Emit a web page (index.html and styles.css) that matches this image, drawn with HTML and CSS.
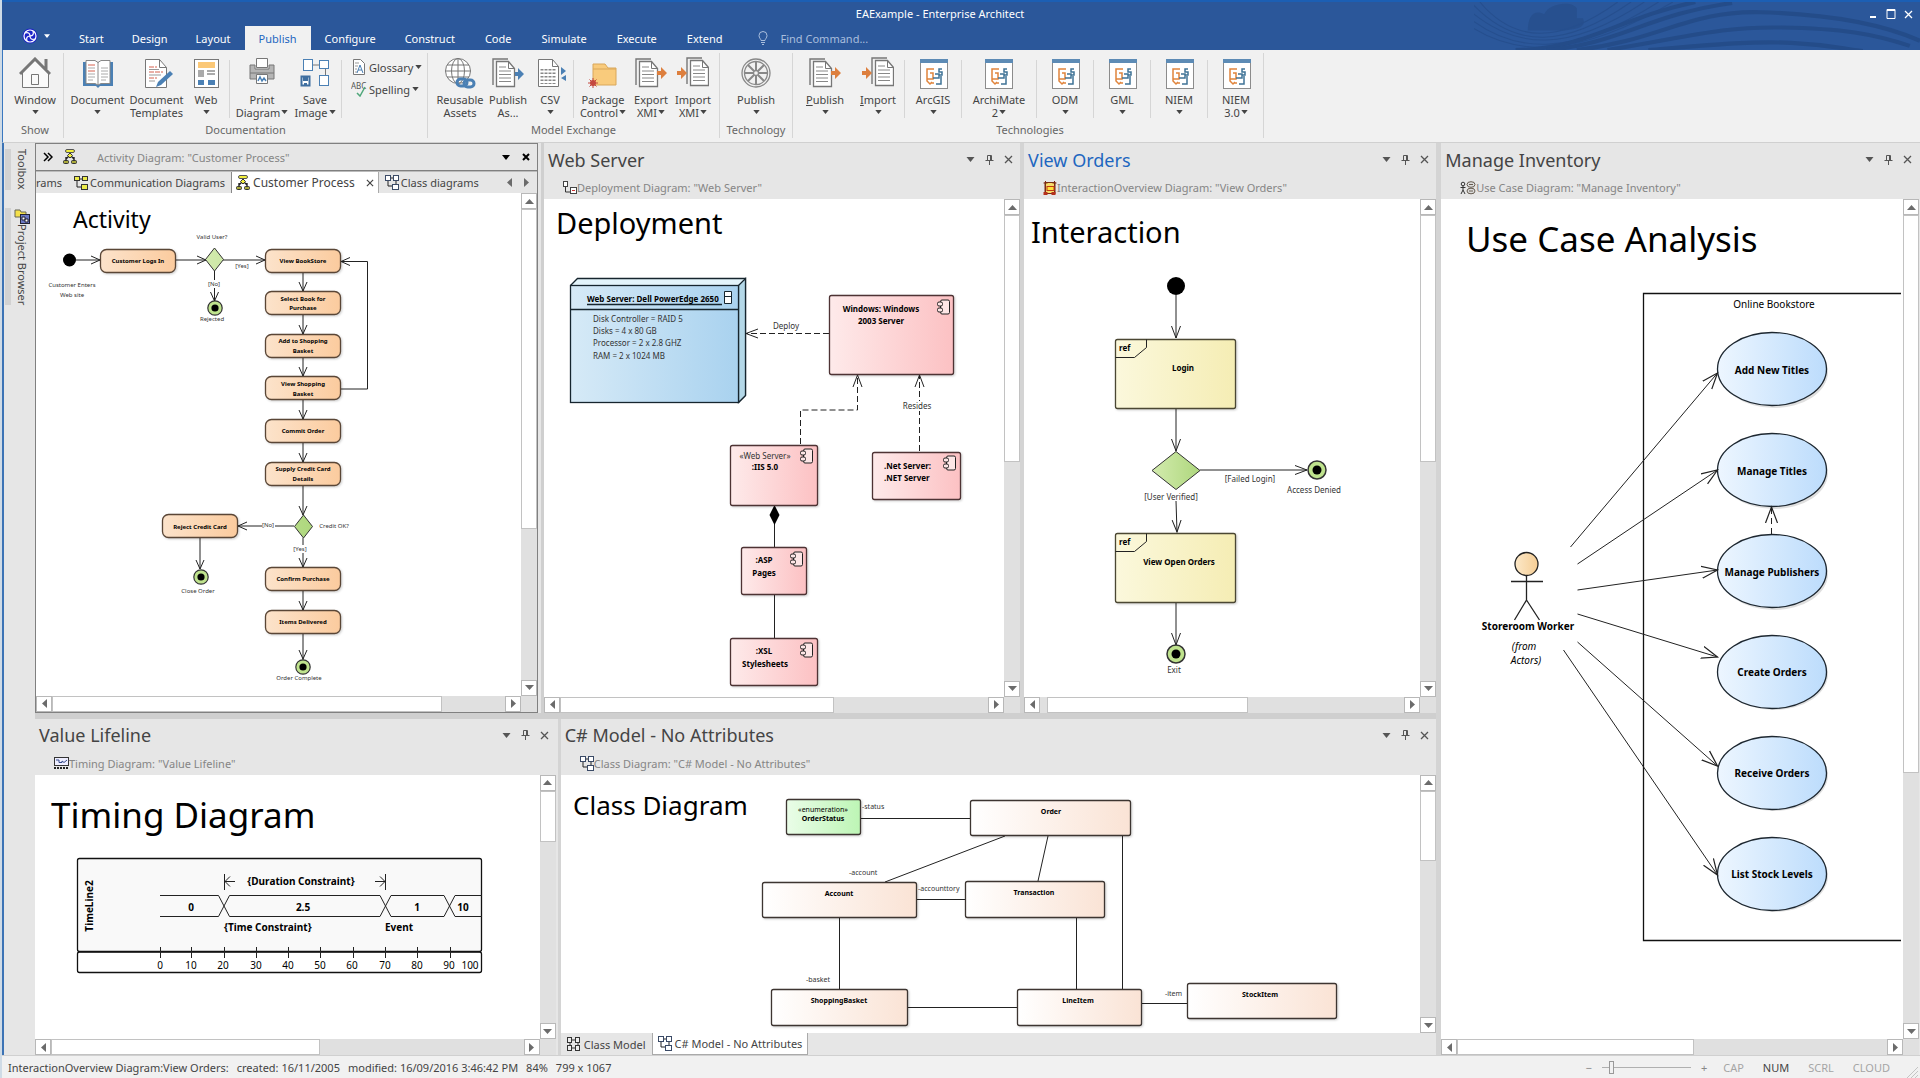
FILE: index.html
```html
<!DOCTYPE html>
<html lang="en">
<head>
  <meta charset="UTF-8" />
  <meta name="viewport" content="width=device-width, initial-scale=1.0" />
  <title>EAExample - Enterprise Architect</title>
  <link rel="stylesheet" href="styles.css">
</head>
<body>
  <!-- Shared icons, gradients and arrow heads -->
  <svg class="defs" width="0" height="0" aria-hidden="true">
    <defs>
      <linearGradient id="gOrange"><stop offset="0" stop-color="#fce3cb"/><stop offset="1" stop-color="#fbcb9e"/></linearGradient>
      <linearGradient id="gPink"><stop offset="0" stop-color="#feeaea"/><stop offset="1" stop-color="#fcc1c3"/></linearGradient>
      <linearGradient id="gBlue"><stop offset="0" stop-color="#d6eaf7"/><stop offset="1" stop-color="#a9d2ef"/></linearGradient>
      <linearGradient id="gCase"><stop offset="0" stop-color="#edf6ff"/><stop offset="1" stop-color="#bcdcfc"/></linearGradient>
      <linearGradient id="gYellow"><stop offset="0" stop-color="#fbf8dc"/><stop offset="1" stop-color="#f5edb4"/></linearGradient>
      <linearGradient id="gGreen"><stop offset="0" stop-color="#d3ebae"/><stop offset="1" stop-color="#aed77d"/></linearGradient>
      <linearGradient id="gEnum"><stop offset="0" stop-color="#eafde8"/><stop offset="1" stop-color="#bdf5b5"/></linearGradient>
      <linearGradient id="gClass"><stop offset="0" stop-color="#ffffff"/><stop offset="1" stop-color="#fae3d5"/></linearGradient>
      <linearGradient id="gActor"><stop offset="0" stop-color="#fce8c8"/><stop offset="1" stop-color="#f5cd94"/></linearGradient>
      <marker id="arrow" markerUnits="userSpaceOnUse" markerWidth="14" markerHeight="12" refX="12" refY="6" orient="auto"><path d="M0 1.500L12 6L0 10.500" fill="none" stroke="#222"/></marker>
      <marker id="arrowBig" markerUnits="userSpaceOnUse" markerWidth="18" markerHeight="16" refX="16" refY="8" orient="auto"><path d="M0 2L16 8L0 14" fill="none" stroke="#222" stroke-width="1.2"/></marker>
    </defs>

    <symbol id="i-down" viewBox="0 0 8 5"><path d="M0 0h8L4 5z" fill="currentColor"/></symbol>
    <symbol id="i-close" viewBox="0 0 9 9"><path d="M1 1l7 7M8 1L1 8" stroke="currentColor" stroke-width="1.3" fill="none"/></symbol>
    <symbol id="i-pin" viewBox="0 0 9 10"><path d="M2.500.5h4v5h-4zM5.500.5v5M.5 5.500h8M4.500 5.500V10" stroke="currentColor" fill="none"/></symbol>
    <symbol id="i-up-arr" viewBox="0 0 9 5"><path d="M0 5h9L4.500 0z" fill="#6b6b6b"/></symbol>
    <symbol id="i-down-arr" viewBox="0 0 9 5"><path d="M0 0h9L4.500 5z" fill="#6b6b6b"/></symbol>
    <symbol id="i-left-arr" viewBox="0 0 5 9"><path d="M5 0v9L0 4.500z" fill="#6b6b6b"/></symbol>
    <symbol id="i-right-arr" viewBox="0 0 5 9"><path d="M0 0v9L5 4.500z" fill="#6b6b6b"/></symbol>

    <symbol id="i-activity" viewBox="0 0 14 16"><path d="M7 4v4M7 6L3 10M7 6l4 4M3 8v5M11 8v5" stroke="#222" stroke-width="1.400" fill="none"/><rect x="2.500" y=".5" width="9" height="3" rx="1.500" fill="#f1ee3c" stroke="#555"/><path d="M7 4l2.500 2.500L7 9 4.500 6.500z" fill="#f1ee3c" stroke="#333"/><rect x=".5" y="11.500" width="5" height="3" rx="1" fill="#a9a93a" stroke="#333"/><rect x="8.500" y="11.500" width="5" height="3" rx="1" fill="#a9a93a" stroke="#333"/></symbol>
    <symbol id="i-comm" viewBox="0 0 14 14"><path d="M5 3h4M3 5v6h5" stroke="#222" fill="none"/><g fill="#eceb4a" stroke="#333"><rect x=".5" y=".5" width="5" height="4"/><rect x="8.500" y=".5" width="5" height="4"/><rect x="7.500" y="8.500" width="6" height="5"/></g></symbol>
    <symbol id="i-class" viewBox="0 0 14 15"><path d="M5 3h4M3 5v6h5M11 5v4" stroke="#222" fill="none"/><g fill="#fff" stroke="#3a4a66"><rect x=".5" y=".5" width="5" height="5"/><rect x="8.500" y=".5" width="5" height="5"/><rect x="7.500" y="9.500" width="6" height="5"/></g></symbol>
    <symbol id="i-model" viewBox="0 0 14 14"><path d="M5 3h4M5 11h4M3 5v4M11 5v4" stroke="#333"/><g fill="#eee" stroke="#333"><rect x=".5" y=".5" width="4" height="5"/><rect x="8.500" y=".5" width="4" height="5"/><rect x=".5" y="8.500" width="4" height="5"/><rect x="8.500" y="8.500" width="4" height="5"/></g></symbol>
    <symbol id="i-deploy" viewBox="0 0 14 14"><path d="M2.500 5v6h5" stroke="#333" fill="none"/><g fill="#fff" stroke="#444"><rect x=".5" y=".5" width="4" height="5"/><rect x="7.500" y="6.500" width="6" height="6"/></g><path d="M9 9.500h3" stroke="#c33"/></symbol>
    <symbol id="i-overview" viewBox="0 0 13 14"><rect x="1.500" y="1.500" width="10" height="11" fill="#f7dc6a" stroke="#7a2c14"/><path d="M0 2h4M2 0v14M9 2h4M11 0v14" stroke="#7a2c14"/><rect x="3.500" y="5.500" width="7" height="4" fill="#ffe13a" stroke="#c23a14"/><path d="M0 11h4v3H0zM8 11h4v3H8z" fill="#b5301c"/></symbol>
    <symbol id="i-usecase" viewBox="0 0 16 14"><g stroke="#333" fill="none"><circle cx="3" cy="3" r="1.800"/><path d="M3 5v4M.5 6.500h5M3 9L1 13M3 9l2 4"/></g><g stroke="#665c50" fill="#ddd"><ellipse cx="11" cy="3.500" rx="4" ry="2.800"/><ellipse cx="11" cy="10" rx="4" ry="2.800"/></g><path d="M9 3.500h4M9 10h4" stroke="#665c50"/></symbol>
    <symbol id="i-timing" viewBox="0 0 15 12"><rect x=".5" y=".5" width="14" height="8" fill="#eef" stroke="#333"/><path d="M2 3h3v2.500h3V4l2 1.500L13 3" stroke="#33488a" fill="none"/><path d="M0 11h15" stroke="#222" stroke-width="2" stroke-dasharray="2 1"/></symbol>

    <symbol id="i-pages" viewBox="0 0 24 30"><path d="M1 27V1h15" stroke="#777" stroke-width="1.400" fill="none"/><path d="M4.500 3.500h12l6 7v18h-18z" fill="#fff" stroke="#777" stroke-width="1.300"/><path d="M16.500 3.500v7h6" stroke="#777" fill="none"/><path d="M7 9h7M7 13h12M7 16.500h12M7 20h12M7 23.500h12" stroke="#888" fill="none"/></symbol>
    <symbol id="i-tech" viewBox="0 0 28 30"><rect x=".5" y=".5" width="27" height="29" fill="#fff" stroke="#8c8c8c"/><path d="M0 0h28v4H0z" fill="#5d8bb5"/><path d="M14 10H7v12l3 3 2-2M7 20h6v-6h-3M11 24h3" stroke="#e0843c" stroke-width="1.500" fill="none"/><path d="M16 25h5v-8M22 10h-3v3h3v3h-3M13 19h6v-4h-4" stroke="#3f7396" stroke-width="1.500" fill="none"/></symbol>
    <symbol id="i-comp" viewBox="0 0 13 16"><g fill="#fde6e6" stroke="#222"><rect x="3.500" y="1" width="9" height="14" rx="1.500"/><rect x=".5" y="3" width="5" height="4" rx="1.500"/><rect x=".5" y="9" width="5" height="4" rx="1.500"/></g></symbol>
    <symbol id="i-final" viewBox="0 0 20 20"><circle cx="10" cy="10" r="9" fill="#bfe38d" stroke="#333" stroke-width="1.500"/><circle cx="10" cy="10" r="4.500"/></symbol>
  </svg>

  <div class="app">
    <!-- Title bar and ribbon tabs -->
    <header class="titlebar">
      <svg class="waves" viewBox="0 0 446 47" preserveAspectRatio="xMaxYMid slice" aria-hidden="true">
        <g fill="#244a84"><path d="M62 28C62 14 68 7 78 12 82 2 104-2 110 6v10h6c4 10-8 10-18 12z" opacity=".5"/></g>
        <g fill="none" stroke="#264f8e"><path d="M15 0C50 42 95 40 150 0"/><path d="M6 0C50 48 100 44 163 0"/><path d="M0 4C50 50 104 48 176 0"/><path d="M0 12C50 54 108 52 190 0"/><path d="M0 20C50 56 112 54 204 0"/></g>
        <g fill="none" stroke="#244c89" stroke-width="4"><path d="M50 47C120 46 150 16 226 0"/><path d="M80 47C150 42 180 12 262 1"/><path d="M110 47C190 38 220 8 290 10S410 22 446 38"/><path d="M140 47C220 34 250 24 310 25s90 6 126 18"/><path d="M180 47C240 42 280 38 320 40s50 6 70 8"/></g>
      </svg>
      <div class="title">EAExample - Enterprise Architect</div>
      <div class="win-buttons">
        <button aria-label="Minimize"><svg width="10" height="10"><path d="M2 8h6" stroke="#fff" stroke-width="2"/></svg></button>
        <button aria-label="Maximize"><svg width="10" height="10"><path d="M1 .5h8v9H1zM1 1.500h8" stroke="#fff" fill="none"/></svg></button>
        <button aria-label="Close"><svg width="9" height="9" color="#fff"><use href="#i-close"/></svg></button>
      </div>
      <nav class="tabs">
        <button class="logo" aria-label="Application menu">
          <svg width="16" height="16" viewBox="0 0 16 16"><circle cx="8" cy="8" r="7.500" fill="#1c22c8"/><g fill="none" stroke="#fff" stroke-width="1.200"><circle cx="8" cy="8" r="6"/><path d="M3 5c3-1 5 0 5 3s2 4 5 3M5 13c-1-3 0-5 3-5s4-2 3-5"/></g></svg>
          <svg width="6" height="4"><use href="#i-down"/></svg>
        </button>
        <button>Start</button>
        <button>Design</button>
        <button>Layout</button>
        <button class="active">Publish</button>
        <button>Configure</button>
        <button class="wide">Construct</button>
        <button class="wide">Code</button>
        <button class="wide">Simulate</button>
        <button class="wide">Execute</button>
        <button class="wide">Extend</button>
        <label class="find">
          <svg width="10" height="14" viewBox="0 0 10 14"><path d="M3 9.500C3 8 1 7 1 4.500a4 4 0 0 1 8 0C9 7 7 8 7 9.500zM3 11.500h4M4 13.500h2" fill="none" stroke="#a9bedd"/></svg>
          <input type="text" placeholder="Find Command..." aria-label="Find Command">
        </label>
      </nav>
    </header>

    <!-- Ribbon -->
    <div class="ribbon">
      <section class="group">
        <div class="tools">
          <button class="tool w56"><svg width="32" height="32"><path d="M3.500 17v13.500h26V17L16 4z" fill="#fafafa"/><path d="M3.500 16v14.500h26V16M12.500 17.500h7v10h-7z" stroke="#777" fill="none"/><path d="M1 17L16 2l15 15M27 12V2" stroke="#777" stroke-width="3" fill="none"/></svg><span>Window</span><svg class="arr"><use href="#i-down"/></svg></button>
        </div>
        <h3>Show</h3>
      </section>

      <section class="group pad">
        <div class="tools">
          <button class="tool w60"><svg width="32" height="32"><path d="M1 5h30v24H18l-2 2-2-2H1z" fill="#4b80b4"/><path d="M4 3.500h9l3 2 3-2h9v23h-9l-3 1.500-3-1.500H4z" fill="#fff" stroke="#888"/><path d="M16 5v23" stroke="#888"/><path d="M6 8h7M6 14h7" stroke="#d5604f"/><path d="M6 11h7M6 17h7M6 20h7M6 23h5M19 11h7M19 14h7M19 17h7M19 20h7M19 23h5" stroke="#aaa"/></svg><span>Document</span><svg class="arr"><use href="#i-down"/></svg></button>
          <button class="tool w60"><svg width="32" height="32"><path d="M4.500 2.500h14l7 8v20h-21z" fill="#fff" stroke="#777"/><path d="M18.500 2.500v8h7" fill="none" stroke="#777"/><path d="M8 10h8M8 15h14M8 21h8" stroke="#d5604f" stroke-dasharray="5 1"/><path d="M8 12.500h10M8 18h12M8 24h6" stroke="#999"/><path d="M15 30l2-5L29 14l3 3-12 11z" fill="#4b80b4"/></svg><span>Document<br>Templates</span></button>
          <button class="tool w40"><svg width="32" height="32"><rect x="4.500" y="2.500" width="24" height="28" fill="#fff" stroke="#777"/><path d="M8 5h17v6H8z" fill="#fbc877"/><path d="M8 13h6v7H8z" fill="#aaa"/><path d="M17 14h8M17 17h8" stroke="#aaa" stroke-width="2"/><path d="M8 23h6v5H8zM18 23h7v5h-7z" fill="#4b80b4"/></svg><span>Web</span><svg class="arr"><use href="#i-down"/></svg></button>
          <i class="sep far"></i>
          <button class="tool w56"><svg width="32" height="32"><path d="M10.500 1.500h11v9h-11z" fill="#fff" stroke="#777"/><path d="M4 8h5v4h14V8h5v14H4z" fill="#b5b5b5" stroke="#777"/><path d="M4 16h24" stroke="#777"/><path d="M10.500 17.500h11v9h-11z" fill="#fff" stroke="#777"/><path d="M12 24l2-4 2 4 2-3 2 3" stroke="#4b80b4" stroke-width="1.500" fill="none"/></svg><span>Print<br>Diagram<svg class="arr-in"><use href="#i-down"/></svg></span></button>
          <button class="tool w50"><svg width="32" height="32"><path d="M13 8h8M26.500 12v6" stroke="#777"/><g fill="#fff" stroke="#4b80b4"><rect x="4.500" y="2.500" width="9" height="11"/><rect x="20.500" y="3.500" width="9" height="8"/><rect x="20.500" y="18.500" width="9" height="10"/></g><path d="M2.500 19.500h8v9h-8z" fill="#fff" stroke="#3f6fa0" stroke-width="2"/><path d="M4 20h5v4H4zM5 26h3v3H5z" fill="#3f6fa0"/></svg><span>Save<br>Image<svg class="arr-in"><use href="#i-down"/></svg></span></button>
          <i class="sep"></i>
          <div class="stack">
            <button><svg width="16" height="16"><path d="M2.500.5h7l4 4v11h-11z" fill="#fff" stroke="#777"/><path d="M4 4h4M4 7h3M4 10h2M4 13h2" stroke="#999"/><path d="M6 14l3-8 3 8M7 11h4" fill="none" stroke="#4b80b4"/></svg>Glossary<svg class="arr"><use href="#i-down"/></svg></button>
            <button><svg width="16" height="16" class="abc"><text x="0" y="8">ABC</text><path d="M6 12l3 3 5-9" fill="none" stroke="#4fa77a" stroke-width="1.500"/></svg>Spelling<svg class="arr"><use href="#i-down"/></svg></button>
          </div>
        </div>
        <h3>Documentation</h3>
      </section>

      <section class="group pad">
        <div class="tools">
          <button class="tool w56"><svg width="32" height="32"><g fill="#fff" stroke="#777"><circle cx="14" cy="14" r="12.500"/><path d="M1.500 14h25M14 1.500v25M3 8h22M3 20h22" fill="none"/><ellipse cx="14" cy="14" rx="6.500" ry="12.500" fill="none"/></g><g fill="none" stroke="#4b80b4" stroke-width="3"><rect x="13" y="22" width="10" height="7" rx="3.500"/><rect x="20" y="23" width="10" height="7" rx="3.500"/></g></svg><span>Reusable<br>Assets</span></button>
          <button class="tool w40"><svg width="32" height="32"><use href="#i-pages" x="0" y="1" width="24" height="30"/><path d="M23 15h3v-4l6 6-6 6v-4h-3z" fill="#4b80b4"/></svg><span>Publish<br>As...</span></button>
          <button class="tool w44"><svg width="32" height="32"><path d="M4.500 2.500h14l6 7v20h-20z" fill="#fff" stroke="#777"/><path d="M18.500 2.500v7h6" fill="none" stroke="#777"/><path d="M8 12v15M12 12v15M16 12v15M20 12v15" stroke="#888" stroke-width="3" stroke-dasharray="1.500 2"/><path d="M27 10l5 4-5 4zM32 18v6l-5-3z" fill="#4b80b4"/></svg><span>CSV</span><svg class="arr"><use href="#i-down"/></svg></button>
          <i class="sep"></i>
          <button class="tool w56"><svg width="32" height="32"><path d="M6 7h12l3 4h8v17H6z" fill="#f9cb7c" stroke="#d9a75b"/><path d="M6 12h23" stroke="#d9a75b"/><circle cx="6" cy="26" r="2" fill="#f3d8d4" stroke="#c4483f" stroke-width="2"/><path d="M6 21v10M1 26h10M2.500 22.500l7 7M9.500 22.500l-7 7" stroke="#c4483f"/></svg><span>Package<br>Control<svg class="arr-in"><use href="#i-down"/></svg></span></button>
          <button class="tool w40"><svg width="32" height="32"><use href="#i-pages" x="0" y="1" width="24" height="30"/><path d="M22 14h4v-4l6 6-6 6v-4h-4z" fill="#dd7f3e"/></svg><span>Export<br>XMI<svg class="arr-in"><use href="#i-down"/></svg></span></button>
          <button class="tool w44"><svg width="32" height="32"><use href="#i-pages" x="9" y="0" width="24" height="30"/><path d="M0 14h4v-4l6 6-6 6v-4H0z" fill="#dd7f3e"/></svg><span>Import<br>XMI<svg class="arr-in"><use href="#i-down"/></svg></span></button>
        </div>
        <h3>Model Exchange</h3>
      </section>

      <section class="group">
        <div class="tools">
          <button class="tool w72"><svg width="32" height="32"><g fill="none" stroke="#888" stroke-width="1.300"><circle cx="16" cy="16" r="14"/><circle cx="16" cy="16" r="11.500"/><circle cx="16" cy="16" r="2.500"/><path d="M16 4.500v9M16 18.500v9M4.500 16h9M18.500 16h9M8 8l6 6M18 18l6 6M24 8l-6 6M14 18l-6 6" stroke-width="2"/></g></svg><span>Publish</span><svg class="arr"><use href="#i-down"/></svg></button>
        </div>
        <h3>Technology</h3>
      </section>

      <section class="group pad">
        <div class="tools">
          <button class="tool w56"><svg width="32" height="32"><use href="#i-pages" x="0" y="1" width="24" height="30"/><path d="M22 14h4v-4l6 6-6 6v-4h-4z" fill="#dd7f3e"/></svg><span><u>P</u>ublish</span><svg class="arr"><use href="#i-down"/></svg></button>
          <button class="tool w50"><svg width="32" height="32"><use href="#i-pages" x="9" y="0" width="24" height="30"/><path d="M0 14h4v-4l6 6-6 6v-4H0z" fill="#dd7f3e"/></svg><span><u>I</u>mport</span><svg class="arr"><use href="#i-down"/></svg></button>
          <i class="sep"></i>
          <button class="tool w54"><svg width="32" height="32"><use href="#i-tech" x="3" y="2" width="28" height="30"/></svg><span>ArcGIS</span><svg class="arr"><use href="#i-down"/></svg></button>
          <i class="sep"></i>
          <button class="tool w72"><svg width="32" height="32"><use href="#i-tech" x="2" y="2" width="28" height="30"/></svg><span>ArchiMate<br>2<svg class="arr-in"><use href="#i-down"/></svg></span></button>
          <i class="sep"></i>
          <button class="tool w54"><svg width="32" height="32"><use href="#i-tech" x="3" y="2" width="28" height="30"/></svg><span>ODM</span><svg class="arr"><use href="#i-down"/></svg></button>
          <i class="sep"></i>
          <button class="tool w54"><svg width="32" height="32"><use href="#i-tech" x="3" y="2" width="28" height="30"/></svg><span>GML</span><svg class="arr"><use href="#i-down"/></svg></button>
          <i class="sep"></i>
          <button class="tool w54"><svg width="32" height="32"><use href="#i-tech" x="3" y="2" width="28" height="30"/></svg><span>NIEM</span><svg class="arr"><use href="#i-down"/></svg></button>
          <i class="sep"></i>
          <button class="tool w54"><svg width="32" height="32"><use href="#i-tech" x="3" y="2" width="28" height="30"/></svg><span>NIEM<br>3.0<svg class="arr-in"><use href="#i-down"/></svg></span></button>
        </div>
        <h3>Technologies</h3>
      </section>
    </div>

    <!-- Workspace -->
    <main class="workspace">
      <aside class="dock">
        <button>Toolbox</button>
        <button><svg width="16" height="16"><path d="M1 2h5l1 2h5v5H1z" fill="#f4e04a" stroke="#665"/><rect x="6.500" y="6.500" width="9" height="9" fill="#6a78c4" stroke="#223"/><path d="M8 9h3v3H8zM11 11h3v3h-3z" fill="#fff" stroke="#223"/></svg>Project Browser</button>
      </aside>

      <div class="left">
        <div class="row top">
          <!-- Activity -->
          <section class="panel activity">
            <div class="bar">
              <svg width="10" height="10"><path d="M1 1l4 4-4 4M5 1l4 4-4 4" fill="none" stroke="#000" stroke-width="1.500"/></svg>
              <svg width="14" height="16"><use href="#i-activity"/></svg>
              <span class="path">Activity Diagram: "Customer Process"</span>
              <button aria-label="List"><svg width="8" height="5" color="#000"><use href="#i-down"/></svg></button>
              <button aria-label="Close"><svg width="8" height="8"><path d="M1 1l6 6M7 1L1 7" stroke="#000" stroke-width="2"/></svg></button>
            </div>
            <div class="doc-tabs">
              <button class="cut">rams</button>
              <button><svg width="14" height="14"><use href="#i-comm"/></svg>Communication Diagrams</button>
              <button class="active"><svg width="14" height="16"><use href="#i-activity"/></svg>Customer Process<svg class="x" width="8" height="8"><use href="#i-close"/></svg></button>
              <button><svg width="14" height="15"><use href="#i-class"/></svg>Class diagrams</button>
              <span class="nav"><button aria-label="Previous"><svg width="5" height="9"><use href="#i-left-arr"/></svg></button><button aria-label="Next"><svg width="5" height="9"><use href="#i-right-arr"/></svg></button></span>
            </div>
            <div class="view">
              <div class="canvas">
                <svg class="s6" width="485" height="502" viewBox="36 193 485 502">
                  <text class="h" x="73" y="228" font-size="23">Activity</text>
                  <g class="ln">
                    <path d="M76 260h24M175 260h31M223 260h42M214.500 271v31M303 273v18M303 315v19M303 358v18M303 400v19M303 443v19M303 486v29M294 526h-56M200 538v31M303 538v29M303 591v19M303 634v26M341 389h26.500v-127.500h-26.500"/>
                  </g>
                  <circle cx="69.500" cy="260" r="6.500"/>
                  <g class="mask"><path d="M208 280h13v8h-13zM262 521h13v8h-13zM294 545h13v8h-13z"/></g>
                  <g fill="url(#gOrange)" stroke="#5a4636" class="box">
                    <rect x="100.500" y="249.500" width="75" height="23" rx="6"/>
                    <rect x="265.500" y="249.500" width="75" height="23" rx="6"/><rect x="265.500" y="291.500" width="75" height="23" rx="6"/>
                    <rect x="265.500" y="334.500" width="75" height="23" rx="6"/><rect x="265.500" y="376.500" width="75" height="23" rx="6"/>
                    <rect x="265.500" y="419.500" width="75" height="23" rx="6"/><rect x="265.500" y="462.500" width="75" height="23" rx="6"/>
                    <rect x="162.500" y="514.500" width="75" height="23" rx="6"/>
                    <rect x="265.500" y="567.500" width="75" height="23" rx="6"/><rect x="265.500" y="610.500" width="75" height="23" rx="6"/>
                  </g>
                  <g fill="url(#gGreen)" stroke="#333"><path d="M214.500 248l9 11.500-9 11.500-9-11.500zM303.500 515l9 11.500-9 11.500-9-11.500z"/></g>
                  <use href="#i-final" x="207" y="300" width="16" height="16"/><use href="#i-final" x="193" y="569" width="16" height="16"/><use href="#i-final" x="295" y="659" width="16" height="16"/>
                  <g class="b m">
                    <text x="138" y="263">Customer Logs In</text><text x="303" y="263">View BookStore</text>
                    <text x="303" y="301">Select Book for</text><text x="303" y="310">Purchase</text>
                    <text x="303" y="343">Add to Shopping</text><text x="303" y="353">Basket</text>
                    <text x="303" y="386">View Shopping</text><text x="303" y="396">Basket</text>
                    <text x="303" y="433">Commit Order</text><text x="303" y="471">Supply Credit Card</text><text x="303" y="481">Details</text>
                    <text x="200" y="529">Reject Credit Card</text><text x="303" y="581">Confirm Purchase</text><text x="303" y="624">Items Delivered</text>
                  </g>
                  <g class="m lbl">
                    <text x="72" y="287">Customer Enters</text><text x="72" y="297">Web site</text><text x="212" y="239">Valid User?</text>
                    <text x="242" y="268">[Yes]</text><text x="214" y="286">[No]</text><text x="212" y="321">Rejected</text>
                    <text x="268" y="527">[No]</text><text x="334" y="528">Credit OK?</text><text x="300" y="551">[Yes]</text>
                    <text x="198" y="593">Close Order</text><text x="299" y="680">Order Complete</text>
                  </g>
                  <g class="ah"><path d="M91 256l9 4-9 4M197 256l9 4-9 4M256 256l9 4-9 4M350 257.500l-9 4 9 4M247 522l-9 4 9 4M210.500 292l4 9 4-9M299 282l4 9 4-9M299 325l4 9 4-9M299 367l4 9 4-9M299 410l4 9 4-9M299 453l4 9 4-9M299 506l4 9 4-9M196 560l4 9 4-9M299 558l4 9 4-9M299 601l4 9 4-9M299 650l4 9 4-9"/></g>
                </svg>
              </div>
              <div class="sb v"><button aria-label="Scroll up"><svg width="9" height="5"><use href="#i-up-arr"/></svg></button><div class="track"><i style="height:68%"></i></div><button aria-label="Scroll down"><svg width="9" height="5"><use href="#i-down-arr"/></svg></button></div>
              <div class="sb hz"><button aria-label="Scroll left"><svg width="5" height="9"><use href="#i-left-arr"/></svg></button><div class="track"><i style="width:86%"></i></div><button aria-label="Scroll right"><svg width="5" height="9"><use href="#i-right-arr"/></svg></button></div>
            </div>
          </section>

          <!-- Deployment -->
          <section class="panel web-server">
            <div class="head"><h2>Web Server</h2><div class="acts"><button aria-label="Menu"><svg width="9" height="5"><use href="#i-down"/></svg></button><button aria-label="Pin"><svg width="9" height="10"><use href="#i-pin"/></svg></button><button aria-label="Close"><svg width="9" height="9"><use href="#i-close"/></svg></button></div></div>
            <div class="sub"><svg width="14" height="14"><use href="#i-deploy"/></svg>Deployment Diagram: "Web Server"</div>
            <div class="view">
              <div class="canvas">
                <svg class="s8" width="459" height="497" viewBox="544 199 459 497">
                  <text class="h" x="556" y="234" font-size="29">Deployment</text>
                  <g stroke="#16252e" stroke-width="1.300"><path d="M570.500 285.500l7-7h168v117l-7 7" fill="#e3f4fb"/><path d="M738.500 285.500l7-7v117l-7 7z" fill="#b4d8e8"/><rect x="570.500" y="285.500" width="168" height="117" fill="url(#gBlue)"/><path d="M570.500 309.500h168M587 304.500h135"/><path d="M724.500 291.500h7v12h-7zM724.500 296.500h7" fill="#fff" stroke-width="1"/></g>
                  <text class="b" x="587" y="302">Web Server: Dell PowerEdge 2650</text>
                  <g class="lbl"><text x="593" y="322">Disk Controller = RAID 5</text><text x="593" y="334">Disks = 4 x 80 GB</text><text x="593" y="346">Processor = 2 x 2.8 GHZ</text><text x="593" y="359">RAM = 2 x 1024 MB</text></g>
                  <g class="ln dash"><path d="M829 333.500h-83" marker-end="url(#arrow)"/><path d="M800.500 444v-34h57v-35" marker-end="url(#arrow)"/><path d="M919.500 451v-76" marker-end="url(#arrow)"/></g>
                  <path class="mask" d="M900 401h36v10h-36z"/>
                  <g class="ln"><path d="M774.500 524v23M774.500 594v44"/></g>
                  <path d="M774.500 505l5 10-5 10-5-10z"/>
                  <g fill="url(#gPink)" stroke="#4e3334" class="box"><rect x="829.500" y="295.500" width="124" height="79" rx="2"/><rect x="730.500" y="445.500" width="87" height="60" rx="2"/><rect x="872.500" y="452.500" width="88" height="47" rx="2"/><rect x="741.500" y="547.500" width="65" height="47" rx="2"/><rect x="730.500" y="638.500" width="87" height="47" rx="2"/></g>
                  <use href="#i-comp" x="937" y="299" width="13" height="16"/><use href="#i-comp" x="800" y="448" width="13" height="16"/><use href="#i-comp" x="943" y="455" width="13" height="16"/><use href="#i-comp" x="790" y="551" width="13" height="16"/><use href="#i-comp" x="800" y="642" width="13" height="16"/>
                  <g class="b m"><text x="881" y="312">Windows: Windows</text><text x="881" y="324">2003 Server</text><text x="765" y="470">:IIS 5.0</text><text x="764" y="563">:ASP</text><text x="764" y="576">Pages</text><text x="764" y="654">:XSL</text><text x="765" y="667">Stylesheets</text></g>
                  <g class="b"><text x="884" y="469">.Net Server:</text><text x="884" y="481">.NET Server</text></g>
                  <g class="m lbl"><text x="786" y="329">Deploy</text><text x="917" y="409">Resides</text><text x="765" y="459">«Web Server»</text></g>
                </svg>
              </div>
              <div class="sb v"><button aria-label="Scroll up"><svg width="9" height="5"><use href="#i-up-arr"/></svg></button><div class="track"><i style="height:53%"></i></div><button aria-label="Scroll down"><svg width="9" height="5"><use href="#i-down-arr"/></svg></button></div>
              <div class="sb hz"><button aria-label="Scroll left"><svg width="5" height="9"><use href="#i-left-arr"/></svg></button><div class="track"><i style="width:64%"></i></div><button aria-label="Scroll right"><svg width="5" height="9"><use href="#i-right-arr"/></svg></button></div>
            </div>
          </section>

          <!-- Interaction -->
          <section class="panel view-orders">
            <div class="head"><h2>View Orders</h2><div class="acts"><button aria-label="Menu"><svg width="9" height="5"><use href="#i-down"/></svg></button><button aria-label="Pin"><svg width="9" height="10"><use href="#i-pin"/></svg></button><button aria-label="Close"><svg width="9" height="9"><use href="#i-close"/></svg></button></div></div>
            <div class="sub"><svg width="14" height="14"><use href="#i-overview"/></svg>InteractionOverview Diagram: "View Orders"</div>
            <div class="view">
              <div class="canvas">
                <svg class="s8" width="396" height="497" viewBox="1024 199 396 497">
                  <text class="h" x="1031" y="243" font-size="29">Interaction</text>
                  <circle cx="1176" cy="286" r="9"/>
                  <g class="ln"><path d="M1176 295v43" marker-end="url(#arrow)"/><path d="M1176 408v43" marker-end="url(#arrow)"/><path d="M1200 470h107" marker-end="url(#arrow)"/><path d="M1176 501l1 31" marker-end="url(#arrow)"/><path d="M1176 602v43" marker-end="url(#arrow)"/></g>
                  <g fill="url(#gYellow)" stroke="#4b4733" class="box"><rect x="1115.500" y="339.500" width="120" height="69" rx="2"/><rect x="1115.500" y="533.500" width="120" height="69" rx="2"/></g>
                  <path d="M1115.500 357.500h19l12-10v-8M1115.500 551.500h19l12-10v-8" fill="none" stroke="#222"/>
                  <path d="M1176 451.500l24 19-24 19-24-19z" fill="url(#gGreen)" stroke="#333"/>
                  <use href="#i-final" x="1307" y="460" width="20" height="20"/><use href="#i-final" x="1166" y="644" width="20" height="20"/>
                  <g class="b"><text x="1119" y="351">ref</text><text x="1119" y="545">ref</text></g>
                  <g class="b m"><text x="1183" y="371">Login</text><text x="1179" y="565">View Open Orders</text></g>
                  <g class="m lbl"><text x="1250" y="482">[Failed Login]</text><text x="1314" y="493">Access Denied</text><text x="1171" y="500">[User Verified]</text><text x="1174" y="673">Exit</text></g>
                </svg>
              </div>
              <div class="sb v"><button aria-label="Scroll up"><svg width="9" height="5"><use href="#i-up-arr"/></svg></button><div class="track"><i style="height:53%"></i></div><button aria-label="Scroll down"><svg width="9" height="5"><use href="#i-down-arr"/></svg></button></div>
              <div class="sb hz"><button aria-label="Scroll left"><svg width="5" height="9"><use href="#i-left-arr"/></svg></button><div class="track"><i style="width:55%;margin-left:2%"></i></div><button aria-label="Scroll right"><svg width="5" height="9"><use href="#i-right-arr"/></svg></button></div>
            </div>
          </section>
        </div>

        <div class="row bottom">
          <!-- Timing -->
          <section class="panel lifeline">
            <div class="head"><h2>Value Lifeline</h2><div class="acts"><button aria-label="Menu"><svg width="9" height="5"><use href="#i-down"/></svg></button><button aria-label="Pin"><svg width="9" height="10"><use href="#i-pin"/></svg></button><button aria-label="Close"><svg width="9" height="9"><use href="#i-close"/></svg></button></div></div>
            <div class="sub"><svg width="15" height="12"><use href="#i-timing"/></svg>Timing Diagram: "Value Lifeline"</div>
            <div class="view">
              <div class="canvas">
                <svg class="s10" width="505" height="265" viewBox="35 774 505 265">
                  <text class="h" x="51" y="827" font-size="35">Timing Diagram</text>
                  <g stroke="#111" stroke-width="1.300"><rect x="77.500" y="951" width="404" height="20.500" rx="2" fill="#fff"/><rect x="77.500" y="857.500" width="404" height="93" rx="2" fill="#f9f9f9"/></g>
                  <g class="ln">
                    <path d="M160 894.500h58.500l11 21h150.500l11-21h53l11 21h27M160 915.500h58.500l11-21h150.500l11 21h53l11-21h27"/>
                    <path d="M224.500 873v16M385.500 873v16M235 880.500h-10M375 880.500h10M230 875.500l-5 5 5 5M380 875.500l5 5-5 5"/>
                    <path d="M160.500 946v11M191.500 946v11M224.500 946v11M256.500 946v11M288.500 946v11M320.500 946v11M353.500 946v11M385.500 946v11M417.500 946v11M450.500 946v11"/>
                  </g>
                  <g class="b m"><text x="301" y="884">{Duration Constraint}</text><text x="191" y="910">0</text><text x="303" y="910">2.5</text><text x="417" y="910">1</text><text x="463" y="910">10</text><text transform="rotate(-90 93 905)" x="93" y="905">TimeLine2</text></g>
                  <g class="b"><text x="224" y="930">{Time Constraint}</text><text x="385" y="930">Event</text></g>
                  <g class="m"><text x="160" y="968">0</text><text x="191" y="968">10</text><text x="223" y="968">20</text><text x="256" y="968">30</text><text x="288" y="968">40</text><text x="320" y="968">50</text><text x="352" y="968">60</text><text x="385" y="968">70</text><text x="417" y="968">80</text><text x="449" y="968">90</text><text x="470" y="968">100</text></g>
                </svg>
              </div>
              <div class="sb v"><button aria-label="Scroll up"><svg width="9" height="5"><use href="#i-up-arr"/></svg></button><div class="track"><i style="height:22%"></i></div><button aria-label="Scroll down"><svg width="9" height="5"><use href="#i-down-arr"/></svg></button></div>
              <div class="sb hz"><button aria-label="Scroll left"><svg width="5" height="9"><use href="#i-left-arr"/></svg></button><div class="track"><i style="width:57%"></i></div><button aria-label="Scroll right"><svg width="5" height="9"><use href="#i-right-arr"/></svg></button></div>
            </div>
          </section>

          <!-- Class model -->
          <section class="panel class-model">
            <div class="head"><h2>C# Model - No Attributes</h2><div class="acts"><button aria-label="Menu"><svg width="9" height="5"><use href="#i-down"/></svg></button><button aria-label="Pin"><svg width="9" height="10"><use href="#i-pin"/></svg></button><button aria-label="Close"><svg width="9" height="9"><use href="#i-close"/></svg></button></div></div>
            <div class="sub"><svg width="14" height="15"><use href="#i-class"/></svg>Class Diagram: "C# Model - No Attributes"</div>
            <div class="view no-h">
              <div class="canvas">
                <svg class="s7" width="860" height="258" viewBox="561 774 860 258">
                  <text class="h" x="573" y="814" font-size="26">Class Diagram</text>
                  <g class="ln"><path d="M860 817.500h110M1005 835l-120 46M1048 835l-10 45M1122.500 835v153M1076.500 917v71M839.500 917v71M916 898.500h49M907 1006.500h110M1141 1002.500h46"/></g>
                  <g stroke="#3d3531" class="box">
                    <rect x="786.500" y="798.500" width="74" height="35" rx="2" fill="url(#gEnum)"/>
                    <g fill="url(#gClass)"><rect x="970.500" y="799.500" width="160" height="35" rx="2"/><rect x="762.500" y="881.500" width="154" height="35" rx="2"/><rect x="965.500" y="880.500" width="139" height="36" rx="2"/><rect x="771.500" y="988.500" width="136" height="36" rx="2"/><rect x="1017.500" y="988.500" width="124" height="36" rx="2"/><rect x="1187.500" y="982.500" width="149" height="35" rx="2"/></g>
                  </g>
                  <g class="b m"><text x="823" y="820">OrderStatus</text><text x="1051" y="813">Order</text><text x="839" y="895">Account</text><text x="1034" y="894">Transaction</text><text x="839" y="1002">ShoppingBasket</text><text x="1078" y="1002">LineItem</text><text x="1260" y="996">StockItem</text></g>
                  <text class="m" x="823" y="811">«enumeration»</text>
                  <g class="lbl"><text x="862" y="808">-status</text><text x="849" y="874">-account</text><text x="918" y="890">-accounttory</text><text x="806" y="981">-basket</text><text x="1165" y="995">-item</text></g>
                </svg>
              </div>
              <div class="sb v"><button aria-label="Scroll up"><svg width="9" height="5"><use href="#i-up-arr"/></svg></button><div class="track"><i style="height:31%"></i></div><button aria-label="Scroll down"><svg width="9" height="5"><use href="#i-down-arr"/></svg></button></div>
            </div>
            <div class="foot-tabs">
              <button><svg width="14" height="14"><use href="#i-model"/></svg>Class Model</button>
              <button class="active"><svg width="14" height="15"><use href="#i-class"/></svg>C# Model - No Attributes</button>
            </div>
          </section>
        </div>
      </div>

      <!-- Use cases -->
      <section class="panel inventory">
        <div class="head"><h2>Manage Inventory</h2><div class="acts"><button aria-label="Menu"><svg width="9" height="5"><use href="#i-down"/></svg></button><button aria-label="Pin"><svg width="9" height="10"><use href="#i-pin"/></svg></button><button aria-label="Close"><svg width="9" height="9"><use href="#i-close"/></svg></button></div></div>
        <div class="sub"><svg width="16" height="14"><use href="#i-usecase"/></svg>Use Case Diagram: "Manage Inventory"</div>
        <div class="view">
          <div class="canvas">
            <svg class="s10" width="460" height="840" viewBox="1442 199 460 840">
              <text class="h" x="1467" y="252" font-size="35">Use Case Analysis</text>
              <path d="M1920 293.500h-275.500v647h275.500" fill="none" stroke="#111" stroke-width="1.300"/>
              <g fill="#000" opacity=".12"><ellipse cx="1775" cy="372" rx="54" ry="36"/><ellipse cx="1775" cy="473" rx="54" ry="36"/><ellipse cx="1775" cy="574" rx="54" ry="36"/><ellipse cx="1775" cy="674" rx="54" ry="36"/><ellipse cx="1775" cy="775" rx="54" ry="36"/><ellipse cx="1775" cy="876" rx="54" ry="36"/></g>
              <g fill="url(#gCase)" stroke="#1d2730" stroke-width="1.300"><ellipse cx="1773" cy="369" rx="54.500" ry="36.500"/><ellipse cx="1773" cy="470" rx="54.500" ry="36.500"/><ellipse cx="1773" cy="571" rx="54.500" ry="36.500"/><ellipse cx="1773" cy="672" rx="54.500" ry="36.500"/><ellipse cx="1773" cy="773" rx="54.500" ry="36.500"/><ellipse cx="1773" cy="874" rx="54.500" ry="36.500"/></g>
              <g class="ln"><path d="M1571.500 547l147-174" marker-end="url(#arrowBig)"/><path d="M1578.500 564l140-94" marker-end="url(#arrowBig)"/><path d="M1578.500 590l140-20" marker-end="url(#arrowBig)"/><path d="M1578.500 614l140 43" marker-end="url(#arrowBig)"/><path d="M1578.500 642l140 124" marker-end="url(#arrowBig)"/><path d="M1564.500 650l154 225" marker-end="url(#arrowBig)"/><path d="M1772.500 534v-27" stroke-dasharray="6 4" marker-end="url(#arrowBig)"/></g>
              <g stroke="#222" stroke-width="1.300" fill="none"><path d="M1527.500 576v24l-12 20M1527.500 600l13 20M1512 581.500h32"/><circle cx="1527.500" cy="564" r="11.500" fill="url(#gActor)"/></g>
              <g class="b m"><text x="1773" y="374">Add New Titles</text><text x="1773" y="475">Manage Titles</text><text x="1773" y="576">Manage Publishers</text><text x="1773" y="676">Create Orders</text><text x="1773" y="777">Receive Orders</text><text x="1773" y="878">List Stock Levels</text><text x="1529" y="630">Storeroom Worker</text></g>
              <g class="m"><text x="1775" y="308">Online Bookstore</text><text class="it" x="1525" y="650">(from</text><text class="it" x="1527" y="664">Actors)</text></g>
            </svg>
          </div>
          <div class="sb v"><button aria-label="Scroll up"><svg width="9" height="5"><use href="#i-up-arr"/></svg></button><div class="track"><i style="height:69%"></i></div><button aria-label="Scroll down"><svg width="9" height="5"><use href="#i-down-arr"/></svg></button></div>
          <div class="sb hz"><button aria-label="Scroll left"><svg width="5" height="9"><use href="#i-left-arr"/></svg></button><div class="track"><i style="width:55%"></i></div><button aria-label="Scroll right"><svg width="5" height="9"><use href="#i-right-arr"/></svg></button></div>
        </div>
      </section>
    </main>

    <!-- Status bar -->
    <footer class="status">
      <span>InteractionOverview Diagram:View Orders:</span>
      <span>created: 16/11/2005</span>
      <span>modified: 16/09/2016 3:46:42 PM</span>
      <span>84%</span>
      <span>799 x 1067</span>
      <div class="zoom">
        <button aria-label="Zoom out">−</button>
        <input type="range" min="0" max="100" value="8" aria-label="Zoom">
        <button aria-label="Zoom in">+</button>
      </div>
      <div class="keys"><span>CAP</span><span class="on">NUM</span><span>SCRL</span><span>CLOUD</span></div>
      <svg class="grip" width="12" height="12"><path d="M1 12L12 1M5 12l7-7M9 12l3-3" stroke="#c4c4c4"/></svg>
    </footer>
  </div>
</body>
</html>
```
FILE: styles.css
```css
* {
  box-sizing: border-box;
}
html, body {
  height: 100%;
}
body {
  margin: 0;
  background: #cfdbe6;
  font-family: "Noto Sans", "Open Sans", sans-serif;
  font-size: 11px;
  color: #444;
  overflow: hidden;
}
button {
  font: inherit;
  color: inherit;
  background: none;
  border: 0;
  padding: 0;
  cursor: pointer;
}
h2, h3 {
  margin: 0;
  font-weight: normal;
}
svg {
  display: block;
  flex: none;
}
.defs {
  position: absolute;
}
.app {
  height: 100vh;
  margin-left: 2px;
  display: flex;
  flex-direction: column;
}

/* title bar */
.titlebar {
  position: relative;
  height: 50px;
  flex: none;
  display: grid;
  grid-template-columns: 1fr auto;
  grid-template-rows: 24px 24px;
  background: #2b579a;
  border-top: 2px solid #1c5fb4;
  color: #fff;
}
.waves {
  position: absolute;
  right: 0;
  top: 0;
  width: 446px;
  height: 48px;
}
.title {
  grid-area: 1 / 1 / 2 / 3;
  text-align: center;
  line-height: 24px;
  padding-right: 42px;
}
.win-buttons {
  grid-area: 1 / 2;
  position: relative;
  display: flex;
  align-items: center;
  gap: 8px;
  padding-right: 7px;
}
.tabs {
  grid-area: 2 / 1 / 3 / 3;
  position: relative;
  display: flex;
}
.tabs button {
  padding: 0 14px;
}
.tabs .wide {
  padding: 0 15px;
}
.tabs .active {
  background: #f1f1f1;
  color: #1e66c0;
}
.tabs .logo {
  display: flex;
  align-items: center;
  gap: 6px;
  padding: 0 15px 4px 20px;
}
.find {
  display: flex;
  align-items: center;
  gap: 13px;
  margin-left: 20px;
}
.find input {
  width: 200px;
  border: 0;
  padding: 0;
  background: none;
  font: inherit;
  color: #fff;
}
.find input::placeholder {
  color: #a9bedd;
  opacity: 1;
}

/* ribbon */
.ribbon {
  display: flex;
  flex: none;
  height: 93px;
  padding: 3px 0 4px 4px;
  border-left: 1px solid #3a78c0;
  border-bottom: 1px solid #d0d0d0;
  background: #f1f1f1;
}
.group {
  display: flex;
  flex-direction: column;
  justify-content: space-between;
  border-right: 1px solid #d6d6d6;
}
.pad {
  padding: 0 4px;
}
.group:last-child {
  padding-right: 0;
}
.group h3 {
  text-align: center;
  font-size: 11px;
  line-height: 16px;
  color: #666;
}
.tools {
  display: flex;
  padding-top: 4px;
}
.tool {
  display: flex;
  flex-direction: column;
  align-items: center;
  gap: 4px;
  height: 62px;
  line-height: 13px;
  white-space: nowrap;
}
.w40 {
  width: 40px;
}
.w44 {
  width: 44px;
}
.w50 {
  width: 50px;
}
.w54 {
  width: 54px;
}
.w56 {
  width: 56px;
}
.w60 {
  width: 59px;
}
.w72 {
  width: 72px;
}
.arr {
  width: 7px;
  height: 4px;
}
.arr-in {
  display: inline-block;
  width: 7px;
  height: 4px;
  margin-left: 1px;
  vertical-align: 3px;
}
.sep {
  width: 1px;
  height: 58px;
  margin: 3px 1px 0;
  background: #d6d6d6;
}
.sep.far {
  margin: 3px 4px 0 3px;
}
.stack {
  display: flex;
  flex-direction: column;
  gap: 2px;
  width: 80px;
  padding-left: 8px;
}
.stack button {
  display: flex;
  align-items: center;
  gap: 2px;
  height: 20px;
}
.abc text {
  font-size: 8px;
  fill: #555;
}

/* workspace */
.workspace {
  display: flex;
  flex: 1;
  min-height: 0;
  padding-right: 1px;
  border-left: 2px solid #3c73b5;
  background: #e6e6e6;
}
.dock {
  width: 31px;
  flex: none;
  display: flex;
  flex-direction: column;
  align-items: flex-start;
  gap: 18px;
  padding: 6px 0 0 1px;
}
.dock button {
  writing-mode: vertical-rl;
  display: flex;
  align-items: center;
  line-height: 22px;
  border-left: 6px solid #d2d2d2;
}
.left {
  flex: 1402 1 0;
  min-width: 0;
  display: flex;
  flex-direction: column;
}
.row {
  display: flex;
  min-height: 0;
}
.top {
  flex: 569 1 0;
}
.bottom {
  flex: 336 1 0;
  border-top: 6px solid #cfcfcf;
}
.panel {
  display: flex;
  flex-direction: column;
  min-width: 0;
}
.activity {
  flex: 502 1 0;
  border: 1px solid #808080;
}
.web-server {
  flex: 477 1 0;
  margin-left: 3px;
  border-left: 3px solid #cfcfcf;
}
.view-orders {
  flex: 413 1 0;
  border-left: 4px solid #d4d4d4;
}
.lifeline {
  flex: 521 1 0;
}
.class-model {
  flex: 876 1 0;
  margin-left: 2px;
  border-left: 3px solid #d4d4d4;
}
.inventory {
  flex: 478 1 0;
  border-left: 5px solid #d4d4d4;
}
.head {
  display: flex;
  align-items: center;
  justify-content: space-between;
  height: 33px;
  flex: none;
  padding: 0 2px 0 4px;
}
.head h2 {
  font-size: 18px;
  line-height: 32px;
}
.view-orders h2 {
  color: #1e66c0;
}
.acts {
  display: flex;
  color: #555;
}
.acts button {
  display: grid;
  place-items: center;
  width: 19px;
  height: 20px;
}
.sub {
  display: flex;
  align-items: center;
  height: 23px;
  flex: none;
  padding-left: 19px;
  color: #858585;
}
.view {
  flex: 1;
  min-height: 0;
  display: grid;
  grid-template-columns: minmax(0, 1fr) 16px;
  grid-template-rows: minmax(0, 1fr) 16px;
  background: #e0e0e0;
}
.no-h {
  grid-template-rows: minmax(0, 1fr);
}
.canvas {
  background: #fff;
  overflow: hidden;
}
.sb {
  display: flex;
}
.v {
  flex-direction: column;
}
.sb button {
  display: grid;
  place-items: center;
  width: 16px;
  height: 16px;
  background: #fff;
  border: 1px solid #b8b8b8;
}
.track {
  flex: 1;
  display: flex;
}
.track i {
  background: #fff;
  border: 1px solid #c2c2c2;
}
.v i {
  width: 100%;
}

/* active document window */
.bar {
  display: flex;
  align-items: center;
  height: 27px;
  flex: none;
  gap: 12px;
  padding: 0 7px;
  border-bottom: 1px solid #808080;
}
.bar svg:nth-child(2) {
  margin-left: -2px;
}
.path {
  flex: 1;
  padding-left: 8px;
  color: #858585;
}
.doc-tabs {
  display: flex;
  height: 22px;
  flex: none;
  border-top: 1px solid #bbb;
}
.doc-tabs button {
  display: flex;
  align-items: center;
  gap: 2px;
  padding: 0 6px;
  white-space: nowrap;
}
.doc-tabs .cut {
  padding: 0 6px 0 0;
}
.doc-tabs .active {
  font-size: 12px;
  gap: 3px;
  padding: 0 4px;
  background: #fff;
  border-left: 1px solid #888;
  border-right: 1px solid #aaa;
}
.x {
  margin-left: 8px;
}
.nav {
  display: flex;
  margin-left: auto;
  padding-right: 2px;
}
.foot-tabs {
  display: flex;
  height: 22px;
  flex: none;
}
.foot-tabs button {
  display: flex;
  align-items: center;
  gap: 3px;
  padding: 0 6px;
}
.foot-tabs .active {
  padding: 0 5px;
  background: #fff;
  border: 1px solid #aaa;
  border-top: 0;
}

/* diagrams */
.canvas text {
  fill: #000;
}
.canvas .lbl text {
  fill: #333;
}
.h {
  text-anchor: start;
}
.s6 {
  font-size: 6px;
}
.s7 {
  font-size: 7px;
}
.s8 {
  font-size: 8px;
}
.s10 {
  font-size: 10px;
}
.b {
  font-weight: bold;
}
.m {
  text-anchor: middle;
}
.it {
  font-style: italic;
}
.ln, .ah {
  fill: none;
  stroke: #222;
}
.dash {
  stroke-dasharray: 6 3;
}
.mask {
  fill: #fff;
}
.box {
  stroke-width: 1.3px;
  filter: drop-shadow(1px 1px 1px rgba(0, 0, 0, 0.2));
}

/* status bar */
.status {
  display: flex;
  align-items: center;
  height: 23px;
  flex: none;
  gap: 8px;
  padding: 0 2px 0 6px;
  border-top: 1px solid #d0d0d0;
  background: #f1f1f1;
}
.zoom {
  display: flex;
  align-items: center;
  gap: 10px;
  margin-left: auto;
  color: #888;
}
.zoom input {
  appearance: none;
  width: 89px;
  height: 14px;
  margin: 0;
  background: linear-gradient(#b0b0b0, #b0b0b0) center / 100% 1px no-repeat;
}
.zoom input::-webkit-slider-thumb {
  appearance: none;
  width: 5px;
  height: 13px;
  background: #f1f1f1;
  border: 1px solid #999;
}
.keys {
  display: flex;
  gap: 19px;
  padding: 0 8px;
  color: #a5a5a5;
}
.keys .on {
  color: #444;
}
.grip {
  align-self: flex-end;
}
```
